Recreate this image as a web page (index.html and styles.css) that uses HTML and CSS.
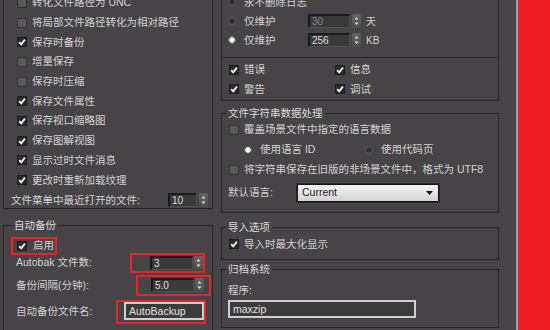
FILE: index.html
```html
<!DOCTYPE html>
<html lang="zh">
<head>
<meta charset="utf-8">
<link rel="stylesheet" href="styles.css">
</head>
<body>
<div class="screen">
  <div class="col left">
    <div class="box box-files">
      <div class="crow"><span class="cb"></span><span>转化文件路径为 UNC</span></div>
      <div class="crow"><span class="cb"></span><span>将局部文件路径转化为相对路径</span></div>
      <div class="crow"><span class="cb on"><svg viewBox="0 0 10 10"><path d="M2.2 5.2 L4.2 7.4 L7.9 2.6"/></svg></span><span>保存时备份</span></div>
      <div class="crow"><span class="cb"></span><span>增量保存</span></div>
      <div class="crow"><span class="cb"></span><span>保存时压缩</span></div>
      <div class="crow"><span class="cb on"><svg viewBox="0 0 10 10"><path d="M2.2 5.2 L4.2 7.4 L7.9 2.6"/></svg></span><span>保存文件属性</span></div>
      <div class="crow"><span class="cb on"><svg viewBox="0 0 10 10"><path d="M2.2 5.2 L4.2 7.4 L7.9 2.6"/></svg></span><span>保存视口缩略图</span></div>
      <div class="crow"><span class="cb on"><svg viewBox="0 0 10 10"><path d="M2.2 5.2 L4.2 7.4 L7.9 2.6"/></svg></span><span>保存图解视图</span></div>
      <div class="crow"><span class="cb on"><svg viewBox="0 0 10 10"><path d="M2.2 5.2 L4.2 7.4 L7.9 2.6"/></svg></span><span>显示过时文件消息</span></div>
      <div class="crow"><span class="cb on"><svg viewBox="0 0 10 10"><path d="M2.2 5.2 L4.2 7.4 L7.9 2.6"/></svg></span><span>更改时重新加载纹理</span></div>
      <div class="row-recent">
        <span>文件菜单中最近打开的文件:</span>
        <span class="spin"><span class="field f-recent">10</span><span class="arrows"><svg viewBox="0 0 9 14"><path d="M2.5 5.5 L4.5 3 L6.5 5.5Z M2.5 8.5 L4.5 11 L6.5 8.5Z"/></svg></span></span>
      </div>
    </div>
    <fieldset class="grp grp-auto">
      <legend>自动备份</legend>
      <div class="mark mark-enable"><span class="cb on"><svg viewBox="0 0 10 10"><path d="M2.2 5.2 L4.2 7.4 L7.9 2.6"/></svg></span><span>启用</span></div>
      <div class="arow arow-count">
        <span>Autobak 文件数:</span>
        <span class="mark mark-count"><span class="spin"><span class="field f-auto">3</span><span class="arrows"><svg viewBox="0 0 9 14"><path d="M2.5 5.5 L4.5 3 L6.5 5.5Z M2.5 8.5 L4.5 11 L6.5 8.5Z"/></svg></span></span></span>
      </div>
      <div class="arow arow-interval">
        <span>备份间隔(分钟):</span>
        <span class="mark mark-interval"><span class="spin"><span class="field f-auto">5.0</span><span class="arrows"><svg viewBox="0 0 9 14"><path d="M2.5 5.5 L4.5 3 L6.5 5.5Z M2.5 8.5 L4.5 11 L6.5 8.5Z"/></svg></span></span></span>
      </div>
      <div class="arow arow-name">
        <span>自动备份文件名:</span>
        <span class="mark mark-name"><span class="input in-name">AutoBackup</span></span>
      </div>
    </fieldset>
  </div>

  <div class="col right">
    <div class="box box-log">
      <div class="rrow"><span class="radio"></span><span>永不删除日志</span></div>
      <div class="rrow"><span class="radio"></span><span class="rlabel">仅维护</span><span class="spin"><span class="field f-log dim">30</span><span class="arrows"><svg viewBox="0 0 9 14"><path d="M2.5 5.5 L4.5 3 L6.5 5.5Z M2.5 8.5 L4.5 11 L6.5 8.5Z"/></svg></span></span><span class="unit">天</span></div>
      <div class="rrow"><span class="radio on"></span><span class="rlabel">仅维护</span><span class="spin"><span class="field f-log">256</span><span class="arrows"><svg viewBox="0 0 9 14"><path d="M2.5 5.5 L4.5 3 L6.5 5.5Z M2.5 8.5 L4.5 11 L6.5 8.5Z"/></svg></span></span><span class="unit">KB</span></div>
    </div>
    <div class="box box-levels">
      <div class="lrow"><span class="cb on"><svg viewBox="0 0 10 10"><path d="M2.2 5.2 L4.2 7.4 L7.9 2.6"/></svg></span><span>错误</span></div>
      <div class="lrow"><span class="cb on"><svg viewBox="0 0 10 10"><path d="M2.2 5.2 L4.2 7.4 L7.9 2.6"/></svg></span><span>信息</span></div>
      <div class="lrow"><span class="cb on"><svg viewBox="0 0 10 10"><path d="M2.2 5.2 L4.2 7.4 L7.9 2.6"/></svg></span><span>警告</span></div>
      <div class="lrow"><span class="cb on"><svg viewBox="0 0 10 10"><path d="M2.2 5.2 L4.2 7.4 L7.9 2.6"/></svg></span><span>调试</span></div>
    </div>
    <fieldset class="grp grp-str">
      <legend>文件字符串数据处理</legend>
      <div class="srow"><span class="cb"></span><span>覆盖场景文件中指定的语言数据</span></div>
      <div class="srow srow-radios">
        <span class="rcell"><span class="radio on"></span><span>使用语言 ID</span></span>
        <span class="rcell"><span class="radio"></span><span>使用代码页</span></span>
      </div>
      <div class="srow"><span class="cb"></span><span>将字符串保存在旧版的非场景文件中，格式为 UTF8</span></div>
      <div class="drow">
        <span class="dlabel">默认语言:</span>
        <span class="dropdown"><span>Current</span><svg viewBox="0 0 7 4"><path d="M0 0 H7 L3.5 4Z"/></svg></span>
      </div>
    </fieldset>
    <fieldset class="grp grp-import">
      <legend>导入选项</legend>
      <div class="srow"><span class="cb on"><svg viewBox="0 0 10 10"><path d="M2.2 5.2 L4.2 7.4 L7.9 2.6"/></svg></span><span>导入时最大化显示</span></div>
    </fieldset>
    <fieldset class="grp grp-arch">
      <legend>归档系统</legend>
      <div class="prow">程序:</div>
      <span class="input in-prog">maxzip</span>
    </fieldset>
  </div>

  <div class="side"></div>
</div>
</body>
</html>
```

FILE: styles.css
```css
html, body {
  margin: 0;
  padding: 0;
}
body {
  background: #464446;
  color: #d4d3d4;
  font-family: "Liberation Sans", "Noto Sans CJK SC", sans-serif;
  font-size: 10.5px;
  line-height: 13px;
}
.screen {
  display: flex;
  height: 330px;
  overflow: hidden;
  padding-left: 3px;
}
.col {
  display: flex;
  flex-direction: column;
  margin-top: -12px;
}
.left { width: 210px; }
.right { width: 278px; margin-left: 8px; }

.box {
  border: 1px solid #262526;
}
.grp {
  border: 1px solid #262526;
  margin: 0;
  padding: 0;
  min-width: 0;
}
.grp legend {
  padding: 0 2px;
  line-height: 13px;
  color: #dcdbdc;
}

/* checkbox */
.cb {
  flex: none;
  width: 10px;
  height: 10px;
  box-sizing: border-box;
  border: 1px solid #343334;
  background: #5a595a;
  margin-right: 5px;
  display: inline-flex;
}
.cb.on {
  background: #2c2b2c;
  border-color: #1e1d1e;
}
.cb svg {
  width: 10px;
  height: 10px;
  margin: -1px;
}
.cb path {
  fill: none;
  stroke: #f2f2f2;
  stroke-width: 1.8;
}

/* radio */
.radio {
  flex: none;
  width: 8px;
  height: 8px;
  box-sizing: border-box;
  border-radius: 50%;
  background: #333233;
  border: 1px solid #626162;
  margin-right: 8px;
}
.radio.on {
  background: radial-gradient(circle, #ffffff 0 2.2px, #dcdcdc 2.6px, #3a393a 3.2px);
  border-color: #6a696a;
}

/* spinner */
.spin {
  display: inline-flex;
  height: 14px;
  flex: none;
}
.field {
  box-sizing: border-box;
  height: 14px;
  background: #3b3a3b;
  border-top: 2px solid #1b1a1b;
  border-left: 2px solid #1b1a1b;
  border-bottom: 1px solid #525152;
  border-right: 1px solid #525152;
  padding-left: 2px;
  line-height: 11px;
  color: #dedede;
  font-size: 10px;
}
.field.dim { color: #8a898a; }
.f-recent { width: 29px; }
.f-auto { width: 43px; }
.f-log { width: 42px; }
.arrows {
  width: 9px;
  height: 14px;
  margin-left: 2px;
  background: linear-gradient(#646364, #4f4e4f);
  border-radius: 2px;
}
.f-auto + .arrows { margin-left: 1px; }
.arrows svg {
  width: 9px;
  height: 14px;
  display: block;
}
.arrows path { fill: #e0e0e0; }

/* text input */
.input {
  display: block;
  box-sizing: border-box;
  height: 18px;
  border: 2px solid #cfcfcf;
  background: #3d3c3d;
  padding-left: 3px;
  line-height: 14px;
  color: #e2e2e2;
}
.in-name { width: 80px; }
.in-prog { width: 188px; margin: 3px 0 0 6px; }

/* red annotation boxes */
.mark {
  border: 2px solid #e2262c;
  box-sizing: border-box;
}

/* left: file settings */
.box-files {
  padding-top: 4px;
}
.crow {
  height: 19.7px;
  display: flex;
  align-items: center;
  padding-left: 13px;
}
.row-recent {
  height: 15px;
  margin-top: 3px;
  display: flex;
  align-items: center;
  justify-content: space-between;
  padding: 0 4px 0 7px;
}

/* left: auto backup */
.grp-auto {
  margin: 10.5px 0 -6px;
  flex: 1;
}
.grp-auto legend { margin-left: 8px; }
.mark-enable {
  display: flex;
  align-items: center;
  width: fit-content;
  height: 18px;
  margin: 4.5px 0 0 7px;
  padding: 0 1px 0 4px;
}
.mark-enable .cb { margin-right: 6px; }
.arow {
  display: flex;
  align-items: center;
  justify-content: space-between;
  padding-left: 12px;
}
.arow-count { margin-top: -2px; padding-right: 7px; }
.arow-interval { margin-top: 2px; padding-right: 1px; }
.arow-name { margin-top: 4px; padding-right: 6px; }
.mark-count {
  display: flex;
  padding: 1px 0 1px 18px;
}
.mark-interval {
  display: flex;
  padding: 1.5px 5px 1.5px 13px;
}
.mark-name {
  display: flex;
  padding: 0 0 2px 6px;
}

/* right: log */
.box-log {
  padding: 3.5px 0 7.5px 6px;
}
.rrow {
  height: 19px;
  display: flex;
  align-items: center;
}
.rlabel { width: 64px; }
.unit {
  margin-left: 5px;
  font-size: 10px;
}
.box-levels {
  border-top: 0;
  display: grid;
  grid-template-columns: 106px 1fr;
  padding: 2px 0 1px 7px;
}
.lrow {
  height: 19.5px;
  display: flex;
  align-items: center;
}

/* right: string handling */
.grp-str {
  margin-top: 5.5px;
  padding-bottom: 10px;
}
.grp-str legend,
.grp-import legend,
.grp-arch legend { margin-left: 4px; }
.srow {
  height: 20px;
  display: flex;
  align-items: center;
  padding-left: 7px;
  white-space: nowrap;
}
.srow-radios { padding-left: 22px; }
.rcell {
  display: flex;
  align-items: center;
  width: 121px;
}
.drow {
  display: flex;
  align-items: center;
  margin-top: 4px;
  padding-left: 6px;
}
.dlabel { width: 69px; }
.dropdown {
  box-sizing: border-box;
  width: 142px;
  height: 18px;
  border: 1px solid #141314;
  box-shadow: 0 0 0 1px #2a292a;
  background: linear-gradient(#f4f4f4, #d3d3d3);
  color: #1e1e1e;
  display: flex;
  align-items: center;
  justify-content: space-between;
  padding: 0 5px 0 4px;
}
.dropdown svg {
  width: 7px;
  height: 4px;
}
.dropdown path { fill: #111; }

.grp-import {
  margin-top: 8.5px;
  padding-bottom: 5px;
}
.grp-arch {
  margin-top: 3px;
  padding-bottom: 9px;
}
.prow {
  height: 14px;
  margin-top: 7px;
  padding-left: 6px;
  line-height: 14px;
}

/* right edge */
.side {
  margin-left: auto;
  width: 32px;
  border-left: 2px solid #9aa4a9;
  background: #ee1c25;
}
```
